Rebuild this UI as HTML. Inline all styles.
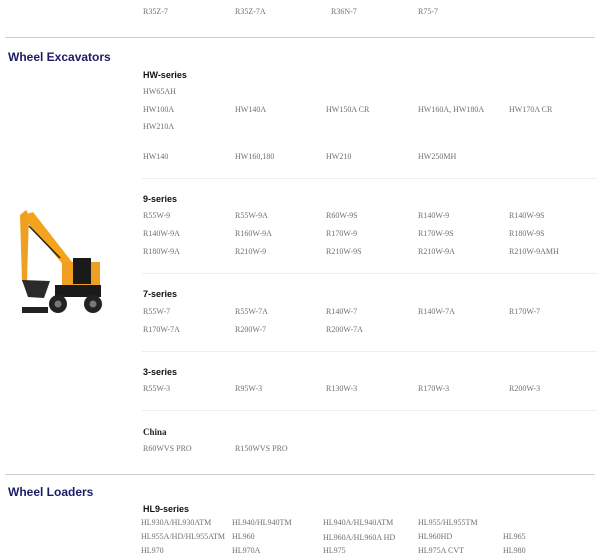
<!DOCTYPE html>
<html><head><meta charset="utf-8"><style>
body{margin:0;width:600px;height:557px;background:#fff;position:relative;overflow:hidden;font-family:"Liberation Serif",serif;}
.t{position:absolute;font-size:8px;color:#707070;white-space:nowrap;line-height:10px;}
.h{position:absolute;font-family:"Liberation Sans",sans-serif;font-weight:bold;font-size:9px;color:#111;line-height:10px;}
.c{position:absolute;font-family:"Liberation Serif",serif;font-weight:bold;font-size:9px;color:#222;line-height:10px;}
.s{position:absolute;font-family:"Liberation Sans",sans-serif;font-weight:bold;font-size:12px;color:#1c1c66;line-height:14px;}
.l{position:absolute;height:1px;background:#ccc;}
.ls{position:absolute;height:1px;background:#eee;left:142px;width:455px;}
</style></head><body>
<div class="t" style="left:143px;top:7px">R35Z-7</div><div class="t" style="left:235px;top:7px">R35Z-7A</div><div class="t" style="left:331px;top:7px">R36N-7</div><div class="t" style="left:418px;top:7px">R75-7</div>
<div class="l" style="left:5px;width:590px;top:37px"></div>
<div class="s" style="left:8px;top:50px">Wheel Excavators</div>
<div class="h" style="left:143px;top:70px">HW-series</div>
<div class="t" style="left:143px;top:87px">HW65AH</div>
<div class="t" style="left:143px;top:105px">HW100A</div><div class="t" style="left:235px;top:105px">HW140A</div><div class="t" style="left:326px;top:105px">HW150A CR</div><div class="t" style="left:418px;top:105px">HW160A, HW180A</div><div class="t" style="left:509px;top:105px">HW170A CR</div>
<div class="t" style="left:143px;top:122px">HW210A</div>
<div class="t" style="left:143px;top:152px">HW140</div><div class="t" style="left:235px;top:152px">HW160,180</div><div class="t" style="left:326px;top:152px">HW210</div><div class="t" style="left:418px;top:152px">HW250MH</div>
<div class="ls" style="top:178px"></div>
<div class="h" style="left:143px;top:194px">9-series</div>
<div class="t" style="left:143px;top:211px">R55W-9</div><div class="t" style="left:235px;top:211px">R55W-9A</div><div class="t" style="left:326px;top:211px">R60W-9S</div><div class="t" style="left:418px;top:211px">R140W-9</div><div class="t" style="left:509px;top:211px">R140W-9S</div>
<div class="t" style="left:143px;top:229px">R140W-9A</div><div class="t" style="left:235px;top:229px">R160W-9A</div><div class="t" style="left:326px;top:229px">R170W-9</div><div class="t" style="left:418px;top:229px">R170W-9S</div><div class="t" style="left:509px;top:229px">R180W-9S</div>
<div class="t" style="left:143px;top:247px">R180W-9A</div><div class="t" style="left:235px;top:247px">R210W-9</div><div class="t" style="left:326px;top:247px">R210W-9S</div><div class="t" style="left:418px;top:247px">R210W-9A</div><div class="t" style="left:509px;top:247px">R210W-9AMH</div>
<div class="ls" style="top:273px"></div>
<div class="h" style="left:143px;top:289px">7-series</div>
<div class="t" style="left:143px;top:307px">R55W-7</div><div class="t" style="left:235px;top:307px">R55W-7A</div><div class="t" style="left:326px;top:307px">R140W-7</div><div class="t" style="left:418px;top:307px">R140W-7A</div><div class="t" style="left:509px;top:307px">R170W-7</div>
<div class="t" style="left:143px;top:325px">R170W-7A</div><div class="t" style="left:235px;top:325px">R200W-7</div><div class="t" style="left:326px;top:325px">R200W-7A</div>
<div class="ls" style="top:351px"></div>
<div class="h" style="left:143px;top:367px">3-series</div>
<div class="t" style="left:143px;top:384px">R55W-3</div><div class="t" style="left:235px;top:384px">R95W-3</div><div class="t" style="left:326px;top:384px">R130W-3</div><div class="t" style="left:418px;top:384px">R170W-3</div><div class="t" style="left:509px;top:384px">R200W-3</div>
<div class="ls" style="top:410px"></div>
<div class="c" style="left:143px;top:427px">China</div>
<div class="t" style="left:143px;top:444px">R60WVS PRO</div><div class="t" style="left:235px;top:444px">R150WVS PRO</div>
<div class="l" style="left:5px;width:590px;top:474px"></div>
<div class="s" style="left:8px;top:485px">Wheel Loaders</div>
<div class="h" style="left:143px;top:504px">HL9-series</div>
<div class="t" style="left:141px;top:518px">HL930A/HL930ATM</div><div class="t" style="left:232px;top:518px">HL940/HL940TM</div><div class="t" style="left:323px;top:518px">HL940A/HL940ATM</div><div class="t" style="left:418px;top:518px">HL955/HL955TM</div>
<div class="t" style="left:141px;top:532px">HL955A/HD/HL955ATM</div><div class="t" style="left:232px;top:532px">HL960</div><div class="t" style="left:323px;top:533px">HL960A/HL960A HD</div><div class="t" style="left:418px;top:532px">HL960HD</div><div class="t" style="left:503px;top:532px">HL965</div>
<div class="t" style="left:141px;top:546px">HL970</div><div class="t" style="left:232px;top:546px">HL970A</div><div class="t" style="left:323px;top:546px">HL975</div><div class="t" style="left:418px;top:546px">HL975A CVT</div><div class="t" style="left:503px;top:546px">HL980</div>
<svg style="position:absolute;left:0;top:0" width="120" height="330" viewBox="0 0 120 330">
<path d="M20 215 L26 210 L29 215 L27 282 L22 282 Z" fill="#f0a020"/>
<path d="M27 214 L33 212 L72 262 L66 268 L27 222 Z" fill="#f3a41c"/>
<path d="M29 226 L60 258" stroke="#222" stroke-width="1.5"/>
<path d="M22 280 L50 281 L44 298 L28 297 Z" fill="#2a2a2a"/>
<rect x="62" y="262" width="38" height="26" fill="#f0a020"/>
<rect x="73" y="258" width="18" height="26" fill="#1a1a1a"/>
<rect x="55" y="285" width="46" height="12" fill="#1a1a1a"/>
<circle cx="58" cy="304" r="9" fill="#222"/><circle cx="58" cy="304" r="3.5" fill="#777"/>
<circle cx="93" cy="304" r="9" fill="#222"/><circle cx="93" cy="304" r="3.5" fill="#777"/>
<rect x="22" y="307" width="26" height="6" fill="#222"/>
</svg>
</body></html>
